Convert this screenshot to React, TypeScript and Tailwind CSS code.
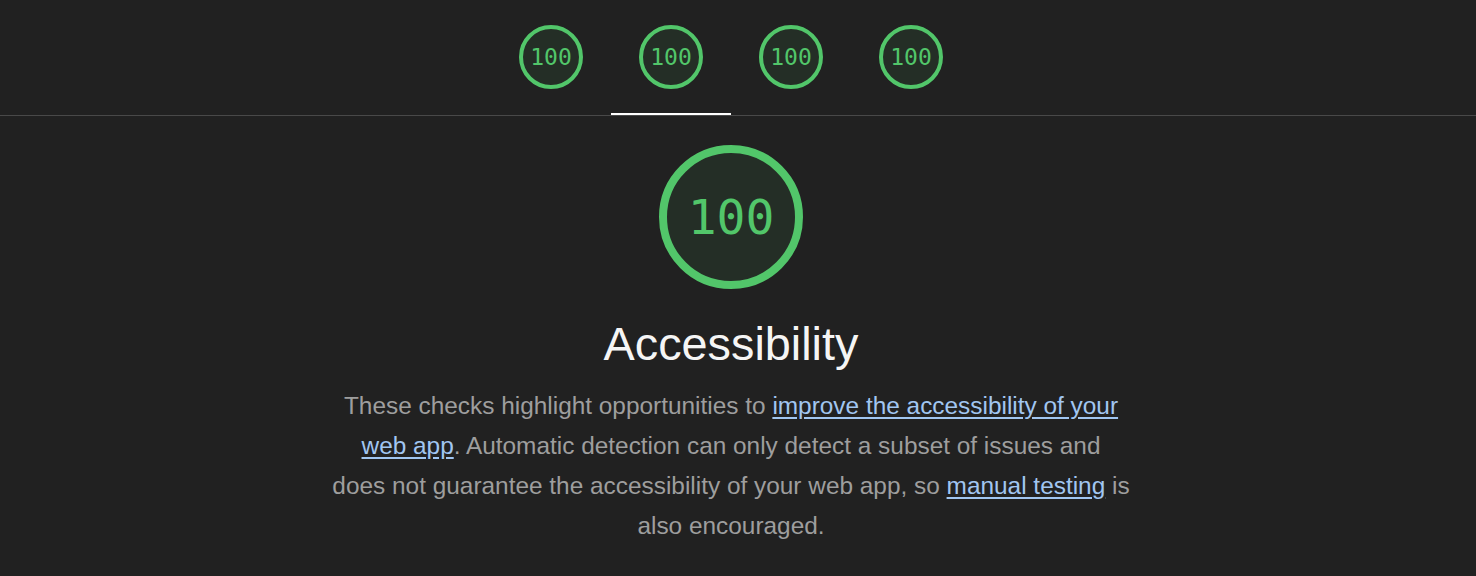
import React from 'react'

const GREEN = '#52c66a'

function Gauge({ size, stroke, fontSize }: { size: number; stroke: number; fontSize: string }): React.JSX.Element {
  const r = (size - stroke) / 2
  return (
    <div className="relative shrink-0" style={{ width: size, height: size }}>
      <svg width={size} height={size} viewBox={`0 0 ${size} ${size}`} className="absolute inset-0">
        <circle cx={size / 2} cy={size / 2} r={r} fill="rgba(82,198,106,0.08)" stroke={GREEN} strokeWidth={stroke} />
      </svg>
      <div
        className={`absolute inset-0 flex items-center justify-center text-[#52c66a] ${fontSize}`}
        style={{ fontFamily: '"DejaVu Sans Mono", "Liberation Mono", monospace' }}
      >
        100
      </div>
    </div>
  )
}

const TABS = ['Performance', 'Accessibility', 'Best Practices', 'SEO']

export default function App(): React.JSX.Element {
  return (
    <div
      className="w-full min-h-[576px] bg-[#212121] overflow-hidden"
      style={{ fontFamily: '"Liberation Sans", Arial, Helvetica, sans-serif' }}
    >
      {/* Category tabs */}
      <div className="border-b border-[#494949]">
        <div className="flex justify-center pr-[14px]">
          {TABS.map((t, i) => (
            <div
              key={t}
              title={t}
              className={`w-[120px] h-[115px] pt-[25px] flex justify-center ${
                i === 1 ? 'border-b-2 border-white -mb-px' : ''
              }`}
            >
              <Gauge size={64} stroke={4} fontSize="text-[23px]" />
            </div>
          ))}
        </div>
      </div>

      {/* Category header */}
      <div className="flex flex-col items-center pr-[14px] pt-[29px]">
        <Gauge size={144} stroke={8} fontSize="text-[48px]" />
        <h1 className="mt-[33px] text-[#f5f5f5] text-[46.8px] leading-[44px] font-normal">Accessibility</h1>
        <p className="mt-[20px] max-w-[798px] text-center text-[24.4px] leading-[40px] text-[#9e9e9e]">
          These checks highlight opportunities to{' '}
          <a href="#" className="text-[#a1c6f1] underline underline-offset-[3px]">
            improve the accessibility of your web app
          </a>
          . Automatic detection can only detect a subset of issues and does not guarantee the accessibility of your web
          app, so{' '}
          <a href="#" className="text-[#a1c6f1] underline underline-offset-[3px]">
            manual testing
          </a>{' '}
          is also encouraged.
        </p>
      </div>
    </div>
  )
}
